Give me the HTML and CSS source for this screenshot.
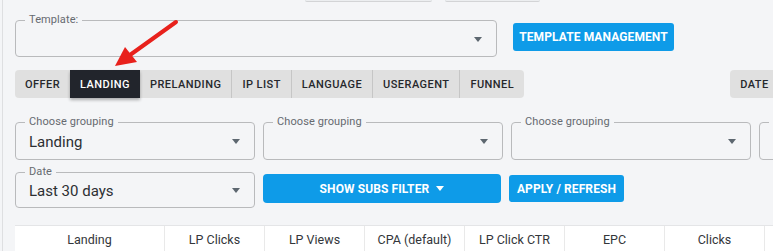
FILE: index.html
```html
<!DOCTYPE html>
<html lang="en">

<head>
    <meta charset="UTF-8">
    <meta name="viewport" content="width=device-width, initial-scale=1.0">
    <title>Report</title>
    <link rel="stylesheet" href="styles.css">
</head>

<body>

    <div class="page">
        <div class="top-strip">
            <span class="stub stub-one"></span>
            <span class="stub stub-two"></span>
        </div>

        <div class="template-row">
            <div class="field field-template">
                <span class="label">Template:</span>
                <span class="value"></span>
                <span class="caret"></span>
            </div>
            <button class="btn btn-template">TEMPLATE MANAGEMENT</button>
        </div>

        <div class="tabs-row">
            <div class="tabs">
                <span class="tab">OFFER</span>
                <span class="tab active">LANDING</span>
                <span class="tab">PRELANDING</span>
                <span class="tab">IP LIST</span>
                <span class="tab">LANGUAGE</span>
                <span class="tab">USERAGENT</span>
                <span class="tab">FUNNEL</span>
            </div>
            <div class="tabs">
                <span class="tab">DATE</span>
                <span class="tab">HOUR</span>
            </div>
        </div>

        <div class="grid grid-groups">
            <div class="field">
                <span class="label">Choose grouping</span>
                <span class="value">Landing</span>
                <span class="caret"></span>
            </div>
            <div class="field">
                <span class="label">Choose grouping</span>
                <span class="value"></span>
                <span class="caret"></span>
            </div>
            <div class="field">
                <span class="label">Choose grouping</span>
                <span class="value"></span>
                <span class="caret"></span>
            </div>
            <div class="field">
                <span class="label">Choose grouping</span>
                <span class="value"></span>
                <span class="caret"></span>
            </div>
        </div>

        <div class="grid grid-actions">
            <div class="field field-date">
                <span class="label">Date</span>
                <span class="value">Last 30 days</span>
                <span class="caret"></span>
            </div>
            <button class="btn btn-subs">SHOW SUBS FILTER <span class="btn-caret"></span></button>
            <button class="btn btn-apply">APPLY / REFRESH</button>
        </div>

        <div class="table">
            <div class="th th-wide">Landing</div>
            <div class="th">LP Clicks</div>
            <div class="th">LP Views</div>
            <div class="th">CPA (default)</div>
            <div class="th">LP Click CTR</div>
            <div class="th">EPC</div>
            <div class="th">Clicks</div>
            <div class="th">Conv.</div>
        </div>

        <!-- стрелка-пометка поверх вкладок -->
        <svg class="pointer" width="80" height="60" viewBox="0 0 80 60">
            <line x1="72" y1="4" x2="26" y2="37" stroke="#e8211c" stroke-width="4" stroke-linecap="round" />
            <polygon points="11,48 21,29 33,44" fill="#e8211c" />
        </svg>
    </div>

</body>

</html>
```

FILE: styles.css
```css
* {
    box-sizing: border-box;
    padding: 0;
    margin: 0;
    font-family: Roboto, 'Liberation Sans', Arial, sans-serif;
}

body {
    background-color: #f4f5f7;
    overflow: hidden;
    width: 773px;
    height: 251px;
}

.page {
    position: relative;
    margin-left: 2px;
    border-left: 1px solid #dedfe1;
    padding-left: 12px;
    height: 251px;
    width: 900px;
}

.top-strip {
    display: flex;
    height: 2px;
    padding-left: 290px;
    gap: 13px;
}

.stub {
    display: block;
    height: 2px;
    border-bottom: 1px solid #d3d4d6;
    border-radius: 0 0 4px 4px;
    background: #eceef0;
}

.stub-one {
    width: 127px;
}

.stub-two {
    width: 95px;
}

/* outlined select */
.field {
    position: relative;
    border: 1px solid #b9babc;
    border-radius: 4px;
    height: 38px;
    display: flex;
    align-items: center;
    padding: 0 14px 0 13px;
}

.label {
    position: absolute;
    top: -7px;
    left: 9px;
    padding: 0 4px;
    background-color: #f4f5f7;
    font-size: 11px;
    line-height: 12px;
    color: #666a70;
    letter-spacing: 0.1px;
}

.value {
    flex: 1;
    font-size: 15px;
    color: #2c2f33;
    padding-top: 1px;
}

.caret {
    width: 0;
    height: 0;
    border-left: 4.5px solid transparent;
    border-right: 4.5px solid transparent;
    border-top: 5px solid #5d6770;
    margin-top: 1px;
}

.template-row {
    display: flex;
    align-items: flex-start;
    margin-top: 18px;
    gap: 16px;
}

.field-template {
    width: 482px;
    height: 37px;
}

.btn {
    border: none;
    border-radius: 3px;
    background-color: #0e9be8;
    color: #ffffff;
    font-size: 12px;
    font-weight: 700;
    letter-spacing: 0.1px;
    height: 28px;
    padding: 0 10px;
    white-space: nowrap;
}

.btn-template {
    margin-top: 3px;
    width: 161px;
    padding: 0;
}

.tabs-row {
    display: flex;
    gap: 206px;
    margin-top: 13px;
}

.tabs {
    display: flex;
    background-color: #e0e0e0;
    border-radius: 4px;
    height: 28px;
}

.tab {
    display: flex;
    align-items: center;
    padding: 0 10px;
    font-size: 11px;
    font-weight: 500;
    letter-spacing: 0.45px;
    color: #26282c;
    border-left: 1px solid #c6c6c6;
}

.tab:first-child {
    border-left: none;
}

.tab.active {
    background-color: #22252c;
    color: #ffffff;
    border-left: none;
    box-shadow: 0 2px 3px rgba(0, 0, 0, 0.3);
}

.tab.active + .tab {
    border-left: none;
}

.grid {
    display: grid;
    grid-template-columns: 240px 240px 240px 240px;
    gap: 8px;
}

.grid-groups {
    margin-top: 24px;
}

.grid-actions {
    margin-top: 12px;
    grid-template-columns: 240px 238px 115px;
    align-items: start;
}

.field-date {
    height: 36px;
}

.btn-subs {
    margin-top: 2px;
    height: 29px;
    border-radius: 4px;
}

.btn-caret {
    display: inline-block;
    width: 0;
    height: 0;
    border-left: 4.5px solid transparent;
    border-right: 4.5px solid transparent;
    border-top: 5px solid #ffffff;
    margin-left: 4px;
    vertical-align: 2px;
}

.btn-apply {
    margin-top: 3px;
    height: 27px;
    padding: 0;
}

.table {
    display: flex;
    margin-top: 17px;
    background-color: #ffffff;
    border-top: 1px solid #e4e5e7;
    height: 30px;
}

.th {
    width: 100px;
    padding-top: 6px;
    text-align: center;
    font-size: 12.5px;
    color: #33363a;
    border-right: 1px solid #e9e9e9;
}

.th-wide {
    width: 150px;
}

.pointer {
    position: absolute;
    left: 101px;
    top: 18px;
}
```
